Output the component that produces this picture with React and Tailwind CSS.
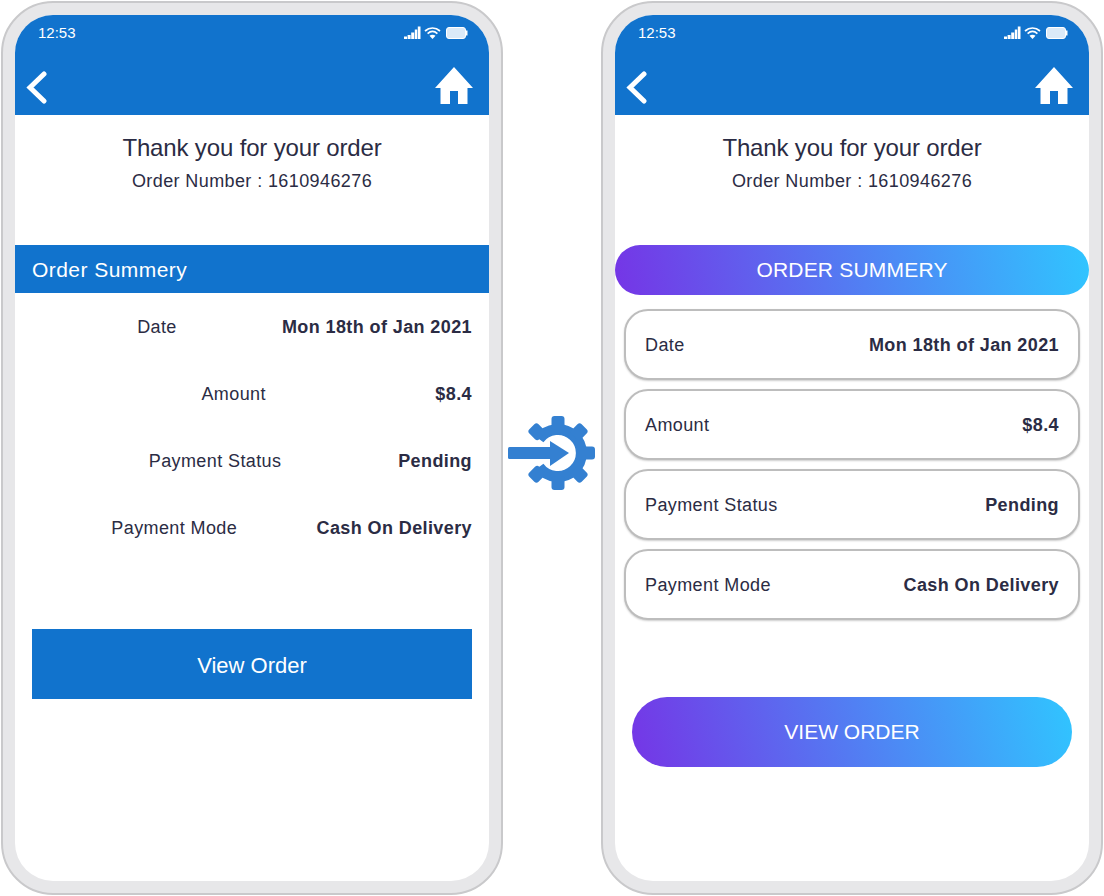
const font = 'font-["Liberation_Sans",Arial,sans-serif]'

function StatusIcons() {
  return (
    <div className="flex items-center gap-[3px]">
      <svg width="17" height="14" viewBox="0 0 17 14" fill="white">
        <path d="M0 10.5H3V13H0ZM3.6 9H6.6V13H3.6ZM7.2 6.5H10.2V13H7.2ZM10.8 3.5H13.2V13H10.8ZM13.8 0.5H16.5V13H13.8Z" />
      </svg>
      <svg width="17" height="14" viewBox="0 0 17 14" fill="none" stroke="white" strokeWidth="1.7">
        <path d="M1 5C5.5 1 11.5 1 16 5" />
        <path d="M3.6 7.6C6.6 5 10.4 5 13.4 7.6" />
        <path d="M8.5 13L5.5 9.7C7.3 8.5 9.7 8.5 11.5 9.7Z" fill="white" stroke="none" />
      </svg>
      <svg width="22" height="12" viewBox="0 0 22 12" fill="none" className="ml-[2px]">
        <rect x="0.5" y="0.5" width="19" height="11" rx="2.5" fill="white" fillOpacity="0.85" stroke="white" />
        <rect x="20" y="3.5" width="1.5" height="5" fill="white" />
      </svg>
    </div>
  )
}

function BackIcon() {
  return (
    <svg width="22" height="33" viewBox="0 0 22 33" fill="none" stroke="white" strokeWidth="5" strokeLinecap="round" className="mt-[5px]">
      <path d="M18 3L4 16.5L18 30" />
    </svg>
  )
}

function HomeIcon() {
  return (
    <svg width="38" height="38" viewBox="0 0 38 38" fill="white">
      <path d="M19 1L38 22H32.5V38H23V25H15V38H5.5V22H0Z" />
    </svg>
  )
}

function Header() {
  return (
    <div className="h-[100px] bg-[#1173cd] text-white">
      <div className="flex items-center justify-between pl-[23px] pr-[21px] pt-[10px] text-[15px] leading-[16px]">
        <span>12:53</span>
        <StatusIcons />
      </div>
      <div className="flex items-center justify-between pl-[11px] pr-[16px] pt-[25px]">
        <BackIcon />
        <HomeIcon />
      </div>
    </div>
  )
}

function ThankYou() {
  return (
    <div className="pt-[18px] text-center text-[#2b2c44]">
      <p className="text-[24px] leading-[30px] tracking-[-0.15px]">Thank you for your order</p>
      <p className="mt-[7px] text-[18px] leading-[22px] tracking-[0.4px]">Order Number : 1610946276</p>
    </div>
  )
}

const rows = [
  ['Date', 'Mon 18th of Jan 2021'],
  ['Amount', '$8.4'],
  ['Payment Status', 'Pending'],
  ['Payment Mode', 'Cash On Delivery'],
]

function Phone({ children }) {
  return (
    <div className="h-[894px] w-[502px] shrink-0 rounded-[52px] border-2 border-[#c9c9cb] bg-[#e7e7e9] p-[12px]">
      <div className="h-[866px] overflow-hidden rounded-[38px] bg-white">{children}</div>
    </div>
  )
}

function OldPhone() {
  return (
    <Phone>
      <Header />
      <ThankYou />
      <div className="mt-[53px] flex h-[48px] items-center bg-[#1173cd] pl-[17px] pt-[2px] text-[21px] tracking-[0.45px] text-white">
        Order Summery
      </div>
      <div className="flex flex-col gap-[45px] px-[17px] pt-[23px] text-[#2b2c44]">
        {rows.map(([label, value]) => (
          <div key={label} className="flex h-[22px] items-center">
            <span className="flex-1 text-center text-[18px] tracking-[0.4px]">{label}</span>
            <span className="text-[18px] font-bold tracking-[0.4px]">{value}</span>
          </div>
        ))}
      </div>
      <div className="mx-[17px] mt-[90px] flex h-[70px] items-center justify-center bg-[#1173cd] pt-[2px] text-[22px] text-white">
        View Order
      </div>
    </Phone>
  )
}

function NewPhone() {
  return (
    <Phone>
      <Header />
      <ThankYou />
      <div className="mt-[53px] flex h-[50px] items-center justify-center rounded-full bg-[linear-gradient(80deg,#7535e6,#30c5ff)] text-[21px] tracking-[0.2px] text-white">
        ORDER SUMMERY
      </div>
      <div className="flex flex-col gap-[9px] px-[9px] pt-[14px] text-[#2b2c44]">
        {rows.map(([label, value]) => (
          <div
            key={label}
            className="flex h-[71px] items-center justify-between rounded-[24px] border-2 border-[#bdbdbd] bg-white px-[19px] pt-[2px] shadow-[0_1px_2px_rgba(0,0,0,0.2)]"
          >
            <span className="text-[18px] tracking-[0.4px]">{label}</span>
            <span className="text-[18px] font-bold tracking-[0.4px]">{value}</span>
          </div>
        ))}
      </div>
      <div className="mx-[17px] mt-[77px] flex h-[70px] items-center justify-center rounded-full bg-[linear-gradient(75deg,#7535e6,#30c5ff)] text-[21px] text-white">
        VIEW ORDER
      </div>
    </Phone>
  )
}

function GearArrow() {
  return (
    <svg width="88" height="88" viewBox="0 0 88 88" fill="#3480d1">
      <path d="M31 30A23.5 23.5 0 1 1 31 58" fill="none" stroke="#3480d1" strokeWidth="11" />
      {[0, 45, 90, -45, -90, 135, -135].map((a) => (
        <rect key={a} x="44" y="37.5" width="14" height="13" rx="3" transform={`rotate(${a} 50 44) translate(29 0)`} />
      ))}
      <rect x="0" y="38" width="44" height="12" rx="1.5" />
      <path d="M42 32L61 44L42 57Z" />
    </svg>
  )
}

export default function App() {
  return (
    <div className={`${font} flex h-[896px] w-[1104px] bg-white pl-px pt-px`}>
      <OldPhone />
      <div className="flex w-[98px] shrink-0 items-start justify-center pt-[408px]">
        <GearArrow />
      </div>
      <NewPhone />
    </div>
  )
}
